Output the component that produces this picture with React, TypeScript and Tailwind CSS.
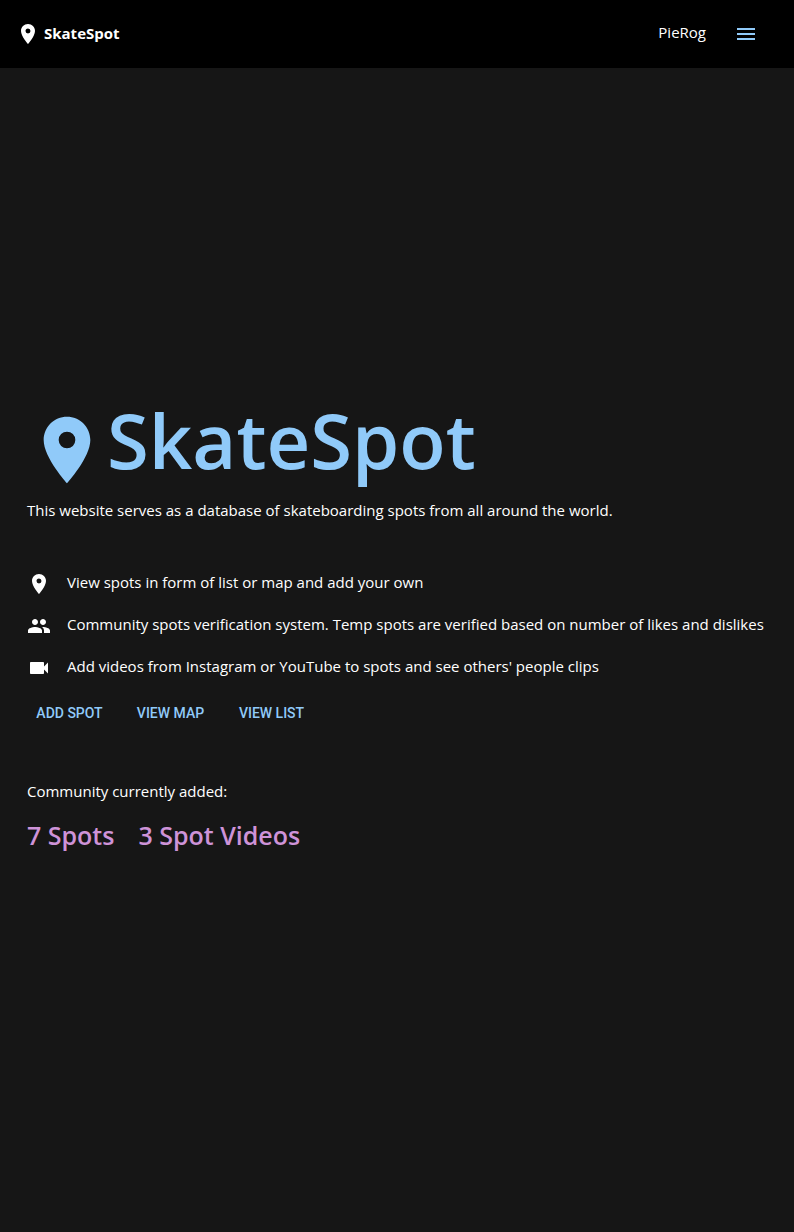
import React from 'react';
import { MdLocationOn, MdPeople, MdVideocam, MdMenu } from 'react-icons/md';

const features = [
  { Icon: MdLocationOn, text: 'View spots in form of list or map and add your own' },
  {
    Icon: MdPeople,
    text: 'Community spots verification system. Temp spots are verified based on number of likes and dislikes',
  },
  { Icon: MdVideocam, text: "Add videos from Instagram or YouTube to spots and see others' people clips" },
];

const actions = ['Add spot', 'View map', 'View list'];

function Header() {
  return (
    <header className="flex h-17 items-center justify-between bg-black pr-7 pl-4">
      <a href="#home" className="flex items-start gap-1 font-bold">
        <MdLocationOn size={24} aria-hidden="true" />
        <span className="leading-[22px]">SkateSpot</span>
      </a>
      <div className="flex items-center gap-5">
        <a href="#profile" className="pb-1">
          PieRog
        </a>
        <button type="button" aria-label="Menu" className="flex h-10 w-10 items-center justify-center text-[#90caf9]">
          <MdMenu size={24} />
        </button>
      </div>
    </header>
  );
}

export default function App() {
  return (
    <div className="flex min-h-screen flex-col bg-[#161616] font-['Open_Sans','Noto_Sans',sans-serif] text-[15px] leading-6 text-white">
      <Header />
      <main className="flex grow flex-col justify-center px-6 pb-10 sm:px-[27px]">
        <h1 className="flex items-start text-[76px] leading-[60px] font-semibold text-[#90caf9]">
          <MdLocationOn size={80} className="shrink-0" aria-hidden="true" />
          SkateSpot
        </h1>
        <p className="mt-2">This website serves as a database of skateboarding spots from all around the world.</p>
        <ul className="mt-10">
          {features.map(({ Icon, text }) => (
            <li key={text} className="flex items-start gap-4 py-2">
              <span className="shrink-0 pt-0.5">
                <Icon size={24} aria-hidden="true" />
              </span>
              <span>{text}</span>
            </li>
          ))}
        </ul>
        <div className="mt-[7px] flex flex-wrap gap-4">
          {actions.map((label) => (
            <button
              key={label}
              type="button"
              className="h-9 min-w-[85px] px-2 font-['Roboto',sans-serif] text-sm font-medium text-[#90caf9] uppercase"
            >
              {label}
            </button>
          ))}
        </div>
        <p className="mt-12">Community currently added:</p>
        <div className="mt-4 flex flex-wrap gap-6 text-[25px] leading-8 font-semibold text-[#ce93d8]">
          <h2>7 Spots</h2>
          <h2>3 Spot Videos</h2>
        </div>
      </main>
    </div>
  );
}
